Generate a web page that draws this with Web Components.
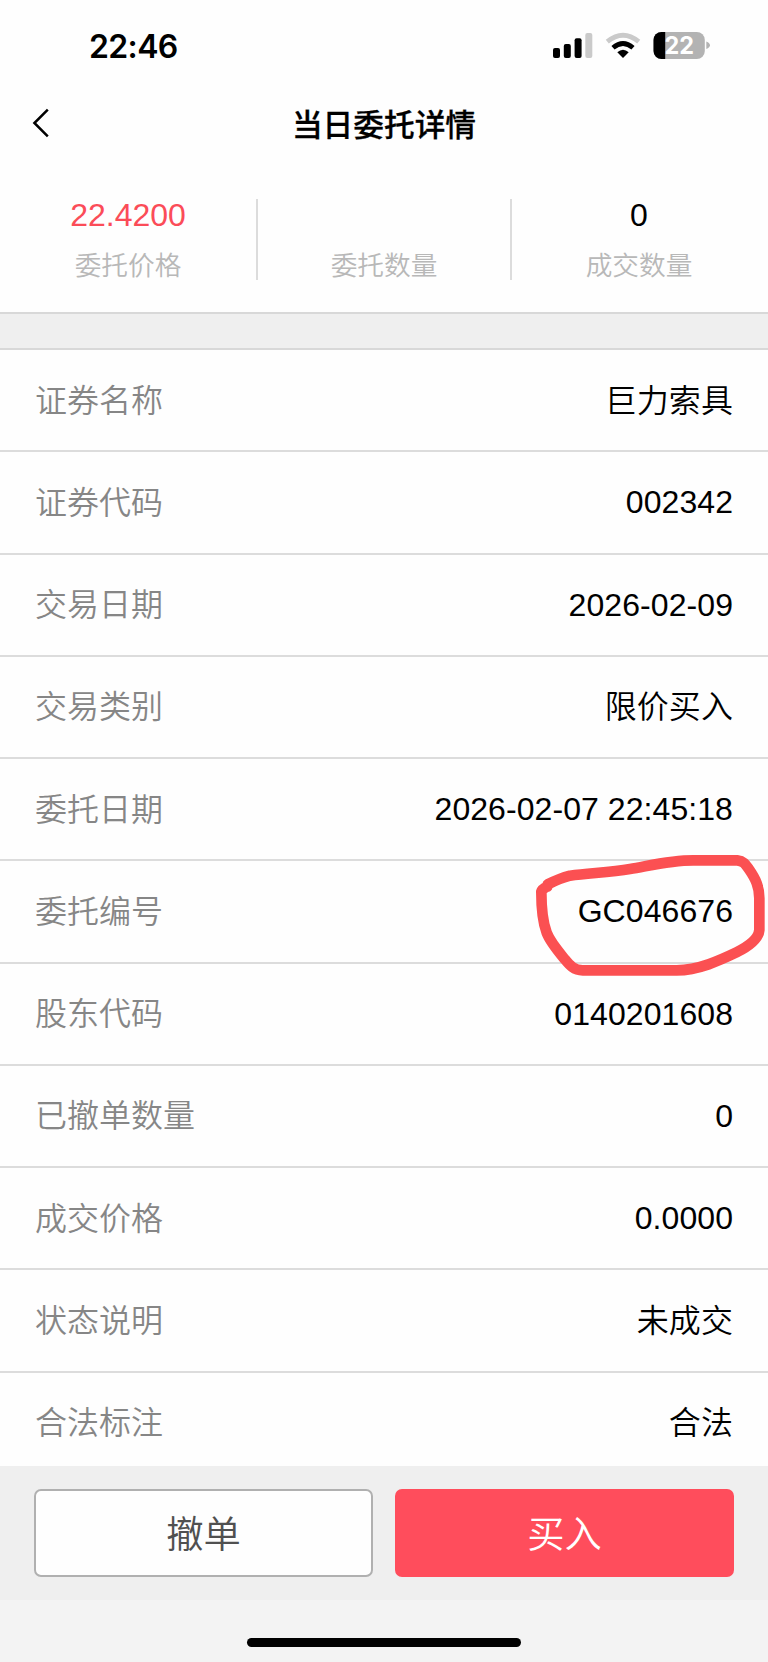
<!DOCTYPE html>
<html lang="zh-CN">
<head>
<meta charset="UTF-8">
<meta name="viewport" content="width=device-width, initial-scale=1">
<title>当日委托详情</title>
<style>
  body {
    margin: 0;
    background: #fefefe;
    color: #000;
    font-family: "Liberation Sans", "Noto Sans CJK SC", sans-serif;
  }
</style>
</head>
<body>
<order-page></order-page>

<script>
class StatusBar extends HTMLElement {
  constructor() {
    super();
    this.shadowDOM = this.attachShadow({ mode: 'open' });
  }

  connectedCallback() {
    this.render();
  }

  render() {
    this.shadowDOM.innerHTML = `
      <style>
        :host {
          display: flex;
          justify-content: space-between;
          height: 92px;
          box-sizing: border-box;
          padding: 0 58px 0 89px;
        }

        .time {
          font: 600 32px/94px Inter, sans-serif;
          letter-spacing: -0.65px;
        }

        svg {
          display: block;
          width: 160px;
          height: 92px;
        }

        text {
          font: 700 24px Inter, sans-serif;
        }
      </style>

      <span class="time">${this.getAttribute('time')}</span>
      <svg viewBox="550 0 160 92">
        <rect x="553" y="48" width="7" height="10" rx="2"/>
        <rect x="563.8" y="44" width="7" height="14" rx="2"/>
        <rect x="574.6" y="38.2" width="7" height="19.8" rx="2"/>
        <rect x="585.3" y="33" width="7" height="25" rx="2" fill="#cacaca"/>
        <g fill="none" stroke-width="4.8">
          <path d="M607.3 41.7 Q623 28.8 638.7 41.7" stroke="#cacaca"/>
          <path d="M613 47.8 Q623 39.2 633 47.8" stroke="#000"/>
        </g>
        <path d="M617.3 52.2 Q623 47.2 628.7 52.2 L623 58Z"/>
        <clipPath id="cell"><rect x="653.5" y="32" width="51.3" height="27" rx="8"/></clipPath>
        <g clip-path="url(#cell)">
          <rect x="653" y="32" width="53" height="27" fill="#b3b3b3"/>
          <rect x="653" y="32" width="12.2" height="27"/>
        </g>
        <path d="M706.3 41.5 Q710 43 710 45.3 T706.3 49Z" fill="#b3b3b3"/>
        <text x="679.3" y="54.2" text-anchor="middle" fill="#fff" textLength="29.5" lengthAdjust="spacingAndGlyphs">${this.getAttribute('battery')}</text>
      </svg>
    `;
  }
}

class NavHeader extends HTMLElement {
  constructor() {
    super();
    this.shadowDOM = this.attachShadow({ mode: 'open' });
  }

  connectedCallback() {
    this.render();
  }

  render() {
    this.shadowDOM.innerHTML = `
      <style>
        :host {
          display: grid;
          grid-template-columns: 80px 1fr 80px;
          align-items: center;
          height: 64px;
        }

        svg {
          display: block;
          margin: 0 0 2px 30px;
        }

        h1 {
          margin: 0;
          padding-top: 4px;
          text-align: center;
          font-size: 30.7px;
          font-weight: 500;
          line-height: 60px;
          -webkit-text-stroke: 0.3px #000;
        }
      </style>

      <svg width="22" height="32" viewBox="0 0 22 32" fill="none" stroke="#000" stroke-width="2.5">
        <path d="M17.8 2.6 L4.4 16 L17.8 29.4"/>
      </svg>
      <h1><slot></slot></h1>
    `;
  }
}

class SummaryItem extends HTMLElement {
  constructor() {
    super();
    this.shadowDOM = this.attachShadow({ mode: 'open' });
  }

  connectedCallback() {
    this.render();
  }

  render() {
    this.shadowDOM.innerHTML = `
      <style>
        :host {
          display: flex;
          flex-direction: column;
          align-items: center;
          height: 81px;
          box-sizing: border-box;
          border-right: 2px solid #dcdcdc;
        }

        :host(:last-child) {
          border-right-color: transparent;
        }

        .value {
          flex: none;
          height: 45px;
          font-size: 32px;
          line-height: 33px;
        }

        .label {
          flex: none;
          color: #b8b8b8;
          font-size: 26.7px;
          font-weight: 350;
          line-height: 44px;
        }
      </style>

      <span class="value"><slot></slot></span>
      <span class="label">${this.getAttribute('label')}</span>
    `;
  }
}

class DetailRow extends HTMLElement {
  constructor() {
    super();
    this.shadowDOM = this.attachShadow({ mode: 'open' });
  }

  connectedCallback() {
    this.render();
  }

  render() {
    this.shadowDOM.innerHTML = `
      <style>
        :host {
          display: flex;
          justify-content: space-between;
          align-items: center;
          flex: none;
          height: 102.28px;
          box-sizing: border-box;
          border-bottom: 2px solid #dcdcdc;
          padding: 0 35px;
          font-size: 32px;
          font-weight: 350;
          line-height: 48px;
        }

        .label {
          color: #868686;
          padding-top: 1px;
        }

        .value {
          letter-spacing: 0.07px;
        }

        :host([cjk]) .value {
          padding-top: 1px;
        }
      </style>

      <span class="label">${this.getAttribute('label')}</span>
      <span class="value"><slot></slot></span>
    `;
  }
}

class ActionButton extends HTMLElement {
  constructor() {
    super();
    this.shadowDOM = this.attachShadow({ mode: 'open' });
  }

  connectedCallback() {
    this.render();
  }

  render() {
    this.shadowDOM.innerHTML = `
      <style>
        :host {
          display: block;
        }

        button {
          display: block;
          width: 100%;
          height: 88px;
          border: 2px solid #b0b0b0;
          border-radius: 7px;
          padding: 0 0 2px;
          background: #fefefe;
          color: #505050;
          font-family: inherit;
          font-size: 37.3px;
          font-weight: 350;
        }

        :host([primary]) button {
          border-color: #ff4d5c;
          background: #ff4d5c;
          color: #fff;
        }
      </style>

      <button type="button"><slot></slot></button>
    `;
  }
}

// Hand-drawn loop laid over the order number
class MarkerCircle extends HTMLElement {
  constructor() {
    super();
    this.shadowDOM = this.attachShadow({ mode: 'open' });
  }

  connectedCallback() {
    this.render();
  }

  render() {
    this.shadowDOM.innerHTML = `
      <style>
        :host {
          position: absolute;
          left: 520px;
          top: 840px;
          pointer-events: none;
        }

        svg {
          display: block;
        }
      </style>

      <svg width="248" height="150" viewBox="0 0 744 450" fill="none" stroke="#fb5052" stroke-width="32" stroke-linecap="round" stroke-linejoin="round">
        <path d="M82 140 L83 133 Q120 115 150 107 C210 99 270 97 330 87 C390 77 450 61 520 61 L652 61 C672 63 678 75 687 88 C707 117 718 140 718 175 L718 270 C716 298 680 322 650 337 C600 361 535 391 470 391 L188 391 C160 391 147 373 132 355 C113 332 88 300 80 278 C66 240 64 200 64 155 Q66 147 82 140"/>
      </svg>
    `;
  }
}

class OrderPage extends HTMLElement {
  constructor() {
    super();
    this.shadowDOM = this.attachShadow({ mode: 'open' });
  }

  connectedCallback() {
    this.render();
  }

  render() {
    this.shadowDOM.innerHTML = `
      <style>
        :host {
          display: flex;
          flex-direction: column;
          position: relative;
          height: 1662px;
          overflow: hidden;
        }

        .summary {
          display: grid;
          grid-template-columns: 258px 254px 256px;
          height: 156px;
          box-sizing: border-box;
          padding-top: 43px;
        }

        .band {
          height: 38px;
          box-sizing: border-box;
          border: 2px solid #d8d8d8;
          border-width: 2px 0;
          background: #efefef;
        }

        .details {
          display: flex;
          flex-direction: column;
          height: 1116px;
          overflow: hidden;
        }

        .actions {
          display: grid;
          grid-template-columns: 1fr 1fr;
          gap: 22px;
          height: 134px;
          box-sizing: border-box;
          padding: 23px 34px 0;
          background: #efefef;
        }

        .home {
          display: flex;
          justify-content: center;
          height: 62px;
          box-sizing: border-box;
          padding-top: 38px;
          background: #f3f3f3;
        }

        .home > i {
          width: 274px;
          height: 9px;
          border-radius: 5px;
          background: #000;
        }
      </style>

      <status-bar time="22:46" battery="22"></status-bar>
      <nav-header>当日委托详情</nav-header>
      <section class="summary">
        <summary-item label="委托价格" style="color: #fb4c58">22.4200</summary-item>
        <summary-item label="委托数量"></summary-item>
        <summary-item label="成交数量">0</summary-item>
      </section>
      <div class="band"></div>
      <section class="details">
        <detail-row label="证券名称" cjk>巨力索具</detail-row>
        <detail-row label="证券代码">002342</detail-row>
        <detail-row label="交易日期">2026-02-09</detail-row>
        <detail-row label="交易类别" cjk>限价买入</detail-row>
        <detail-row label="委托日期">2026-02-07 22:45:18</detail-row>
        <detail-row label="委托编号">GC046676</detail-row>
        <detail-row label="股东代码">0140201608</detail-row>
        <detail-row label="已撤单数量">0</detail-row>
        <detail-row label="成交价格">0.0000</detail-row>
        <detail-row label="状态说明" cjk>未成交</detail-row>
        <detail-row label="合法标注" cjk>合法</detail-row>
      </section>
      <footer>
        <div class="actions">
          <action-button>撤单</action-button>
          <action-button primary>买入</action-button>
        </div>
        <div class="home"><i></i></div>
      </footer>
      <marker-circle></marker-circle>
    `;
  }
}

customElements.define('status-bar', StatusBar);
customElements.define('nav-header', NavHeader);
customElements.define('summary-item', SummaryItem);
customElements.define('detail-row', DetailRow);
customElements.define('action-button', ActionButton);
customElements.define('marker-circle', MarkerCircle);
customElements.define('order-page', OrderPage);
</script>
</body>
</html>
